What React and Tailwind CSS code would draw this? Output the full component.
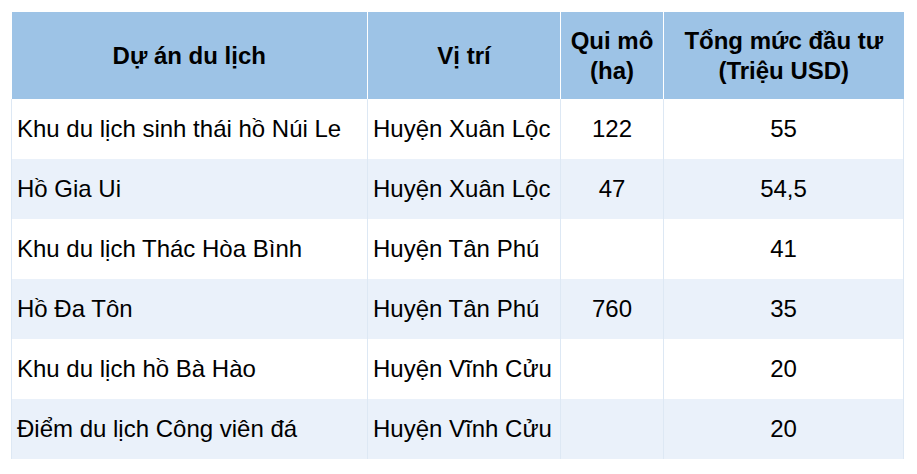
const rows = [
  ['Khu du lịch sinh thái hồ Núi Le', 'Huyện Xuân Lộc', '122', '55'],
  ['Hồ Gia Ui', 'Huyện Xuân Lộc', '47', '54,5'],
  ['Khu du lịch Thác Hòa Bình', 'Huyện Tân Phú', '', '41'],
  ['Hồ Đa Tôn', 'Huyện Tân Phú', '760', '35'],
  ['Khu du lịch hồ Bà Hào', 'Huyện Vĩnh Cửu', '', '20'],
  ['Điểm du lịch Công viên đá', 'Huyện Vĩnh Cửu', '', '20'],
];

export default function App() {
  return (
    <div className="w-[917px] h-[474px] bg-white pt-[12px] pl-[11px]" style={{ fontFamily: '"Liberation Sans", Arial, sans-serif' }}>
      <table className="border-collapse text-[24px] text-black leading-[30px]">
        <colgroup>
          <col className="w-[356px]" />
          <col className="w-[193px]" />
          <col className="w-[103px]" />
          <col className="w-[240px]" />
        </colgroup>
        <thead>
          <tr className="h-[87px] bg-[#9dc3e6] font-bold">
            <th className="border-r border-white text-center align-middle">Dự án du lịch</th>
            <th className="border-r border-white text-center align-middle">Vị trí</th>
            <th className="border-r border-white text-center align-middle">Qui mô<br />(ha)</th>
            <th className="text-center align-middle">Tổng mức đầu tư<br />(Triệu USD)</th>
          </tr>
        </thead>
        <tbody>
          {rows.map((r, i) => (
            <tr key={i} className={`h-[60px] ${i % 2 ? 'bg-[#eaf1fa]' : 'bg-white'}`}>
              <td className="border-l border-r border-[#dde8f4] pl-[5px] align-middle whitespace-nowrap">{r[0]}</td>
              <td className="border-r border-[#dde8f4] pl-[5px] align-middle whitespace-nowrap">{r[1]}</td>
              <td className="border-r border-[#dde8f4] text-center align-middle">{r[2]}</td>
              <td className="border-r border-[#dde8f4] text-center align-middle">{r[3]}</td>
            </tr>
          ))}
        </tbody>
      </table>
    </div>
  );
}
